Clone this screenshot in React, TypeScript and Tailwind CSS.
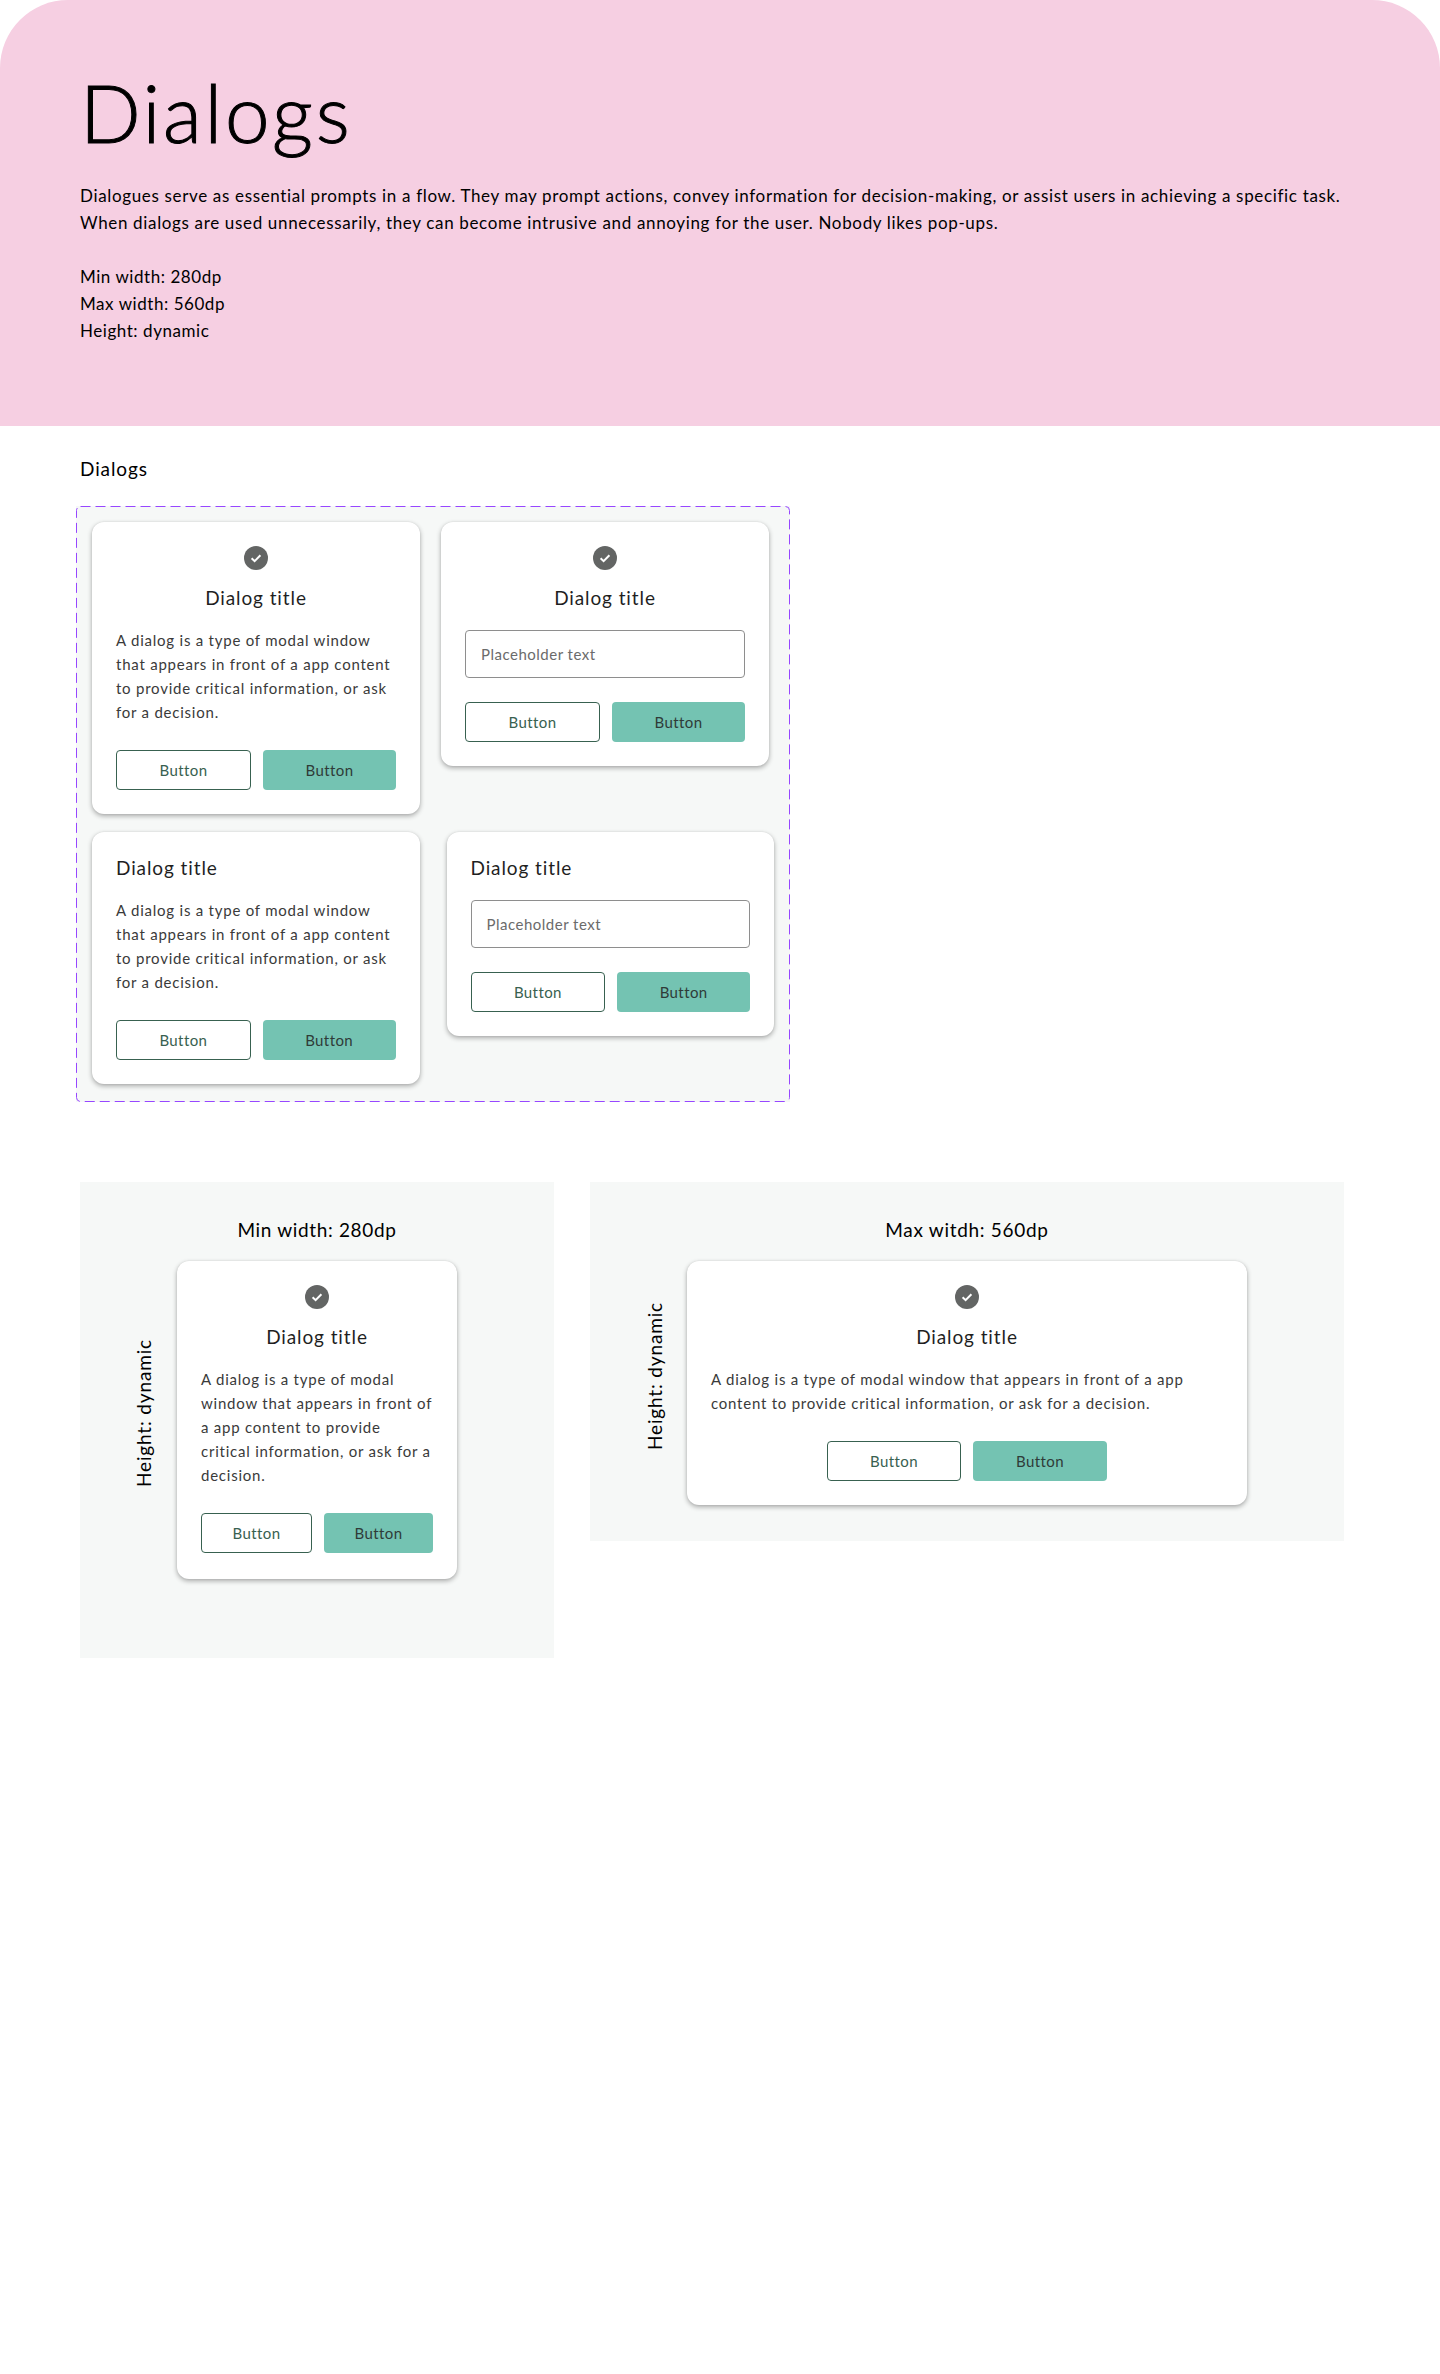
import React from "react";

const dialogText = "A dialog is a type of modal window that appears in front of a app content to provide critical information, or ask for a decision.";

function CheckIcon() {
    return (
        <svg width="24" height="24" viewBox="0 0 24 24" className="block">
            <circle cx="12" cy="12" r="12" fill="#636564" />
            <path d="M7.6 12.3l3 2.9 5.8-6" fill="none" stroke="#fff" strokeWidth="2" />
        </svg>
    );
}

function Buttons({ className = "w-full", width = "flex-1" }: { className?: string; width?: string }) {
    return (
        <div className={`flex gap-3 ${className}`}>
            <button className={`${width} h-10 rounded border border-[#386150] bg-white text-[15px] tracking-[0.4px] text-[#386150]`}>
                Button
            </button>
            <button className={`${width} h-10 rounded bg-[#74C3B2] text-[15px] tracking-[0.4px] text-[#2f3b38]`}>
                Button
            </button>
        </div>
    );
}

function Title({ center }: { center?: boolean }) {
    return (
        <h3 className={`text-[19px] leading-6 tracking-[0.9px] text-[#1f1f1f] ${center ? "text-center" : ""}`}>
            Dialog title
        </h3>
    );
}

function Body() {
    return <p className="mt-[18px] text-[15px] leading-6 tracking-[0.77px] text-[#3a3a3a]">{dialogText}</p>;
}

function Field() {
    return (
        <div className="mt-5 flex h-12 items-center rounded border border-[#8e8e8e] bg-white px-[15px] text-[15px] tracking-[0.5px] text-[#6b6b6b]">
            Placeholder text
        </div>
    );
}

function Card({ children, className = "w-[328px]" }: { children: React.ReactNode; className?: string }) {
    return (
        <div className={`flex flex-col rounded-xl bg-white p-6 shadow-[0_2px_5px_rgba(0,0,0,0.32),0_0_2px_rgba(0,0,0,0.08)] ${className}`}>
            {children}
        </div>
    );
}

function IconHead() {
    return (
        <div className="mb-4 flex justify-center">
            <CheckIcon />
        </div>
    );
}

function HeightLabel({ gap }: { gap: string }) {
    return (
        <span className={`absolute top-[calc(50%-7px)] right-full -translate-y-1/2 rotate-180 text-[19px] leading-6 tracking-[0.85px] whitespace-nowrap text-black [writing-mode:vertical-rl] ${gap}`}>
            Height: dynamic
        </span>
    );
}

export default function App() {
    return (
        <div className="min-h-[2374px] bg-white font-['Lato',sans-serif]">
            <header className="h-[426px] rounded-t-[68px] bg-[#F6CFE2] px-20 pt-16 text-black">
                <h1 className="text-[80px] leading-[96px] font-light tracking-[2.7px] [-webkit-text-stroke:1px_black]">Dialogs</h1>
                <p className="mt-[22px] text-[17px] leading-[27px] tracking-[0.66px]">
                    Dialogues serve as essential prompts in a flow. They may prompt actions, convey information for decision-making, or assist users in achieving a specific task.
                    <br />
                    When dialogs are used unnecessarily, they can become intrusive and annoying for the user. Nobody likes pop-ups.
                </p>
                <p className="mt-[27px] text-[17px] leading-[27px] tracking-[0.55px]">
                    Min width: 280dp
                    <br />
                    Max width: 560dp
                    <br />
                    Height: dynamic
                </p>
            </header>

            <main className="px-20">
                <h2 className="mt-[31px] text-[19px] leading-6 tracking-[0.9px] text-black">Dialogs</h2>

                {/* Component set with the dashed frame */}
                <div className="relative mt-[25px] -ml-1 flex h-[596px] w-[714px] flex-col gap-[18px] bg-[#F6F8F7] p-4">
                    <svg className="pointer-events-none absolute inset-0 h-full w-full">
                        <rect x="0.5" y="0.5" width="713" height="595" rx="4" fill="none" stroke="#9747FF" strokeDasharray="10 5" />
                    </svg>
                    <div className="relative flex items-start gap-[21px]">
                        <Card>
                            <IconHead />
                            <Title center />
                            <Body />
                            <Buttons className="mt-[26px]" />
                        </Card>
                        <Card>
                            <IconHead />
                            <Title center />
                            <Field />
                            <Buttons className="mt-6" />
                        </Card>
                    </div>
                    <div className="relative flex items-start gap-[27px]">
                        <Card>
                            <Title />
                            <Body />
                            <Buttons className="mt-[26px]" />
                        </Card>
                        <Card>
                            <Title />
                            <Field />
                            <Buttons className="mt-6" />
                        </Card>
                    </div>
                </div>

                <div className="mt-20 flex items-start gap-9">
                    <section className="flex h-[476px] w-[474px] flex-col items-center bg-[#F6F8F7] pt-9">
                        <h3 className="text-[19px] leading-6 tracking-[0.65px] text-black">Min width: 280dp</h3>
                        <div className="relative mt-[19px]">
                            <HeightLabel gap="mr-[21px]" />
                            <Card className="w-[280px] pb-[26px]">
                                <IconHead />
                                <Title center />
                                <Body />
                                <Buttons className="mt-[26px]" />
                            </Card>
                        </div>
                    </section>

                    <section className="flex h-[359px] w-[754px] flex-col items-center bg-[#F6F8F7] pt-9">
                        <h3 className="text-[19px] leading-6 tracking-[0.7px] text-black">Max witdh: 560dp</h3>
                        <div className="relative mt-[19px]">
                            <HeightLabel gap="mr-[20px]" />
                            <Card className="w-[560px]">
                                <IconHead />
                                <Title center />
                                <Body />
                                <Buttons className="mt-[26px] justify-center" width="w-[134px]" />
                            </Card>
                        </div>
                    </section>
                </div>
            </main>
        </div>
    );
}
